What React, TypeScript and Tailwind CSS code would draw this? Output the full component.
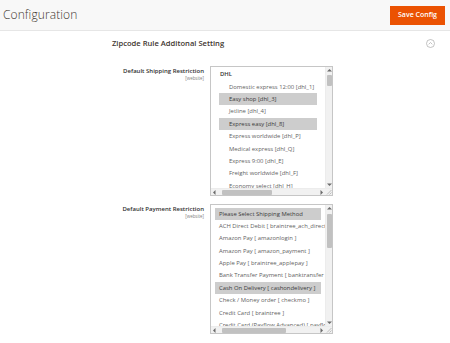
import React from 'react';

/* ── Data ── */
const SHIPPING_OPTIONS = [
  'Domestic express 12:00 [dhl_1]',
  'Easy shop [dhl_3]',
  'Jetline [dhl_4]',
  'Express easy [dhl_8]',
  'Express worldwide [dhl_P]',
  'Medical express [dhl_Q]',
  'Express 9:00 [dhl_E]',
  'Freight worldwide [dhl_F]',
  'Economy select [dhl_H]',
];
const SHIPPING_SELECTED = ['Easy shop [dhl_3]', 'Express easy [dhl_8]'];

const PAYMENT_OPTIONS = [
  'Please Select Shipping Method',
  'ACH Direct Debit [ braintree_ach_direct ]',
  'Amazon Pay [ amazonlogin ]',
  'Amazon Pay [ amazon_payment ]',
  'Apple Pay [ braintree_applepay ]',
  'Bank Transfer Payment [ banktransfer ]',
  'Cash On Delivery [ cashondelivery ]',
  'Check / Money order [ checkmo ]',
  'Credit Card [ braintree ]',
  'Credit Card (Payflow Advanced) [ payflow_advanced ]',
];
const PAYMENT_SELECTED = ['Please Select Shipping Method', 'Cash On Delivery [ cashondelivery ]'];

const FONT = { fontFamily: '"Open Sans", "Noto Sans", Arial, sans-serif' };

/* ── Scrollbar bits ── */
function Arrow({ dir }: { dir: 'up' | 'down' | 'left' | 'right' }) {
  const pts = {
    up: '1,4.5 3.5,2 6,4.5',
    down: '1,2.5 3.5,5 6,2.5',
    left: '4.5,1 2,3.5 4.5,6',
    right: '2.5,1 5,3.5 2.5,6',
  }[dir];
  return (
    <svg width="7" height="7" viewBox="0 0 7 7" className="shrink-0">
      <polygon points={pts} fill="#6b6b6b" />
    </svg>
  );
}

function VScroll({ thumb }: { thumb: string }) {
  return (
    <div className="w-[7px] flex flex-col bg-[#f1f1f1] border-l border-[#ececec]">
      <Arrow dir="up" />
      <div className="flex-1 flex flex-col items-center">
        <div className={`w-[5px] rounded-[1px] bg-[#c1c1c1] ${thumb}`} />
      </div>
      <Arrow dir="down" />
    </div>
  );
}

function HScroll({ thumb }: { thumb: string }) {
  return (
    <div className="h-[7px] flex bg-[#f1f1f1] border-t border-[#ececec]">
      <Arrow dir="left" />
      <div className="flex-1 flex items-center">
        <div className={`h-[5px] rounded-[1px] bg-[#c1c1c1] ${thumb}`} />
      </div>
      <Arrow dir="right" />
      <div className="w-[7px] relative">
        <svg width="7" height="7" viewBox="0 0 7 7" className="absolute right-0 bottom-0">
          <line x1="6.5" y1="2" x2="2" y2="6.5" stroke="#9a9a9a" strokeWidth="0.6" />
          <line x1="6.5" y1="4.5" x2="4.5" y2="6.5" stroke="#9a9a9a" strokeWidth="0.6" />
        </svg>
      </div>
    </div>
  );
}

/* ── Field row ── */
function FieldLabel({ text }: { text: string }) {
  return (
    <div className="w-[204px] shrink-0 text-right pt-[1px]">
      <div className="text-[6px] leading-[8px] font-semibold text-[#303030]">{text}</div>
      <div className="text-[4.4px] leading-[6px] text-[#808080]">[website]</div>
    </div>
  );
}

function Option({ label, selected, textPad }: { label: string; selected: boolean; textPad: string }) {
  return (
    <div
      className={`h-[12.4px] leading-[12.4px] whitespace-nowrap text-[5.9px] ${textPad} ${
        selected ? 'bg-[#cdcdcd] text-[#3a3a3a]' : 'text-[#5f5f5f]'
      }`}
    >
      {label}
    </div>
  );
}

/* ══════════════════════════════════════════════════════════════════════════
   CONFIGURATION PAGE
   ══════════════════════════════════════════════════════════════════════════ */
export default function App() {
  return (
    <div className="w-[450px] h-[343px] bg-white overflow-hidden" style={FONT}>
      {/* Page header */}
      <div className="h-[31px] flex items-center bg-[#f8f8f8] border-b border-[#e6e6e6] pl-[3px] pr-[5px]">
        <h1 className="text-[12px] font-light text-[#41362f] tracking-[0.1px]">Configuration</h1>
        <button className="ml-auto w-[55px] h-[19px] bg-[#eb5202] text-white text-[7px] font-semibold">
          Save Config
        </button>
      </div>

      {/* Section title */}
      <div className="h-[25px] flex items-center pl-[112px] pr-[15px]">
        <span className="text-[7.6px] font-semibold text-[#41362f]">Zipcode Rule Additonal Setting</span>
        <svg width="9" height="9" viewBox="0 0 9 9" className="ml-auto">
          <circle cx="4.5" cy="4.5" r="4" fill="none" stroke="#a9a9a9" strokeWidth="0.7" />
          <polyline points="2.7,5.3 4.5,3.5 6.3,5.3" fill="none" stroke="#a9a9a9" strokeWidth="0.7" />
        </svg>
      </div>

      {/* Shipping restriction */}
      <div className="flex mt-[10px]">
        <FieldLabel text="Default Shipping Restriction" />
        <div className="ml-[6px] w-[123px] h-[130px] border border-[#c6c6c6] flex flex-col">
          <div className="flex-1 flex min-h-0">
            <div className="flex-1 overflow-hidden pl-[8px] pt-[1.3px]">
              <div className="w-[98px]">
                <div className="h-[12.4px] leading-[12.4px] pl-[1px] text-[5.9px] font-semibold text-[#333]">DHL</div>
                {SHIPPING_OPTIONS.map((o) => (
                  <Option key={o} label={o} selected={SHIPPING_SELECTED.includes(o)} textPad="pl-[10px]" />
                ))}
              </div>
            </div>
            <VScroll thumb="mt-[1px] h-[11px]" />
          </div>
          <HScroll thumb="ml-[4px] w-[50px]" />
        </div>
      </div>

      {/* Payment restriction */}
      <div className="flex mt-[8px]">
        <FieldLabel text="Default Payment Restriction" />
        <div className="ml-[6px] w-[123px] h-[130px] border border-[#c6c6c6] flex flex-col">
          <div className="flex-1 flex min-h-0">
            <div className="flex-1 overflow-hidden pl-[4px] pt-[2.5px]">
              <div className="w-[106px]">
                {PAYMENT_OPTIONS.map((o) => (
                  <Option key={o} label={o} selected={PAYMENT_SELECTED.includes(o)} textPad="pl-[4px]" />
                ))}
              </div>
            </div>
            <VScroll thumb="mt-[2px] h-[34px]" />
          </div>
          <HScroll thumb="ml-[4px] w-[64px]" />
        </div>
      </div>
    </div>
  );
}
